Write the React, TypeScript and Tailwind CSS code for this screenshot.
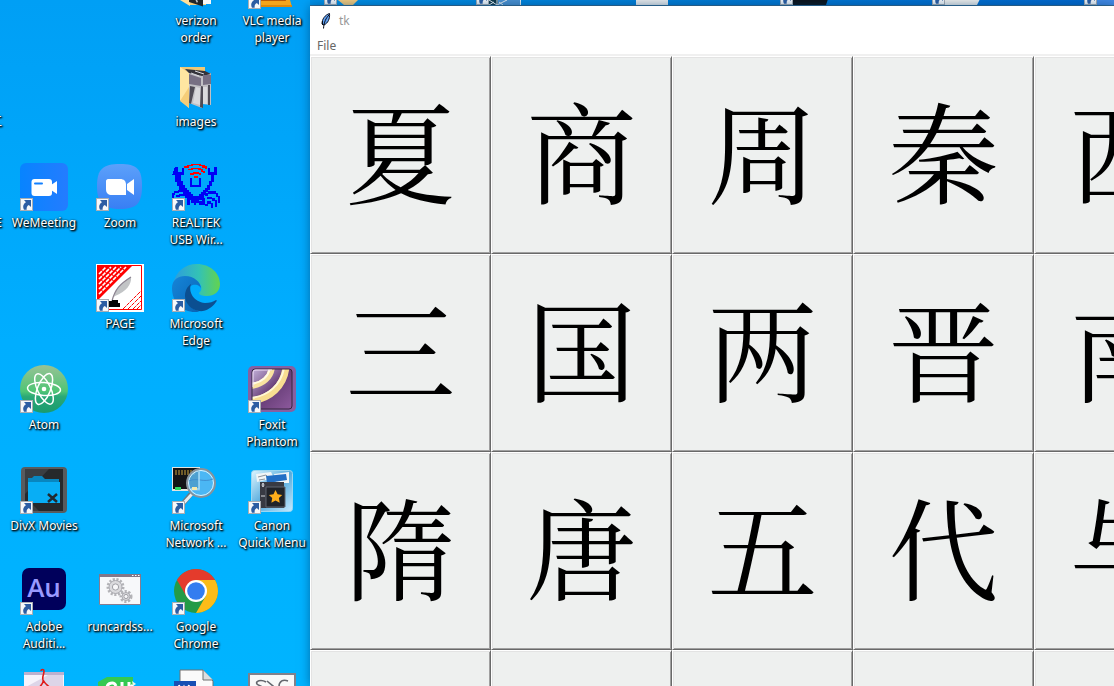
import { Fragment, type ReactNode } from "react";

function Art({ children, crisp = false }: { children: ReactNode; crisp?: boolean }) {
  return (
    <svg
      viewBox="0 0 48 48"
      className="block size-12"
      fill="none"
      aria-hidden="true"
      shapeRendering={crisp ? "crispEdges" : "auto"}
    >
      {children}
    </svg>
  );
}

function ShortcutArrow({ className = "" }: { className?: string }) {
  return (
    <svg viewBox="0 0 13 13" className={`block h-[13px] w-[13px] ${className}`} aria-hidden="true">
      <path d="M0 0h13v13H0z" fill="#a9aeb4" />
      <path d="M1 1h11v11H1z" fill="#f6f8fa" />
      <path d="M4 2h7v7L8.800 7C7 8 6.400 9.500 6.700 11.700H4C2.300 8.500 3.500 5.800 6 4.300z" fill="#2c5da3" />
    </svg>
  );
}

const VerizonFolder = () => (
  <Art>
    <path d="M8 4h26v40H18L8 36z" fill="#f3cf80" />
    <path d="M8 30l10 4v11L8 39z" fill="#ffe09a" />
    <path d="M17 32h14v13.500L17 41z" fill="#20262b" />
    <path d="M31 30h8v13h-8z" fill="#f7f9fb" />
    <path d="M23 38l3 2-1 2z" fill="#d4dade" />
  </Art>
);

const Vlc = () => (
  <Art>
    <path d="M20 4h8l8 28H12z" fill="#f58a07" />
    <path d="M8 32h32l4 14H6z" fill="#f5a51c" />
    <path d="M10 36h27l1 4H10z" fill="#bd5b05" />
    <path d="M6 44h38v2H6z" fill="#df8909" />
  </Art>
);

const ImagesFolder = () => (
  <Art>
    <path d="M8 5h25v32H8z" fill="#efc875" />
    <path d="M8 5l9 6v35l-9-8z" fill="#ffe6a1" />
    <path d="M8 39l9-14v21z" fill="#f5cd78" />
    <path d="M13 7l13 4h13v32l-9-1v4l-13-5V11z" fill="#c1c0c4" />
    <path d="M13 7l20 2 6 3-9 2-13-3z" fill="#34343a" />
    <path d="M17 12l12 4v8l-12-2zM31 13h8v9l-8 1z" fill="#777083" />
    <path d="M19 11l8 3M23 9l9 3" stroke="#d8d8df" />
    <path d="M18 24l5 1-4 17-2-1zM29 24l2 .5V46l-3-1zM36 23h2v20h-2z" fill="#4e4b55" />
    <path d="M24 25l4 1v17l-7-2zM31 25h4v17h-4z" fill="#d9d9dc" />
  </Art>
);

const WeMeeting = () => (
  <Art>
    <defs>
      <linearGradient id="wm">
        <stop stopColor="#0784ff" />
        <stop offset="1" stopColor="#247cff" />
      </linearGradient>
    </defs>
    <rect width="48" height="48" rx="6" fill="url(#wm)" />
    <rect x="11.500" y="16" width="20.500" height="17" rx="3" fill="#fff" />
    <path d="M31 22l6-4v13l-6-4z" fill="#fff" />
    <path d="M15 20.500h7" stroke="#1380ff" strokeWidth="2" strokeLinecap="round" />
  </Art>
);

const Zoom = () => (
  <Art>
    <defs>
      <linearGradient id="zm" x2="0" y2="1">
        <stop stopColor="#5ca0fa" />
        <stop offset="1" stopColor="#387ff4" />
      </linearGradient>
    </defs>
    <path d="M24 1c17 0 22 5 22 22s-5 23-22 23S1 40 1 23 7 1 24 1z" fill="url(#zm)" />
    <path d="M12 16h12c4 0 6 2 6 6v10H16c-4 0-6-2-6-6v-8c0-1 1-2 2-2z" fill="#fff" />
    <path d="M31 21l7-5v16l-7-5z" fill="#fff" />
  </Art>
);

const Realtek = () => (
  <Art crisp>
    <path d="M12 5v-2h3v-1h4v-1.500h10v1.500h4v1h2v3h-2v-1.500h-3v-1.500h-3v-1h-6v1h-4v1.500h-3v1z" fill="#f00" />
    <path d="M16 7v-1.500h3v-1h10v1.500h2v1.500h2v2h-2v-1h-2v-1.500h-3v-1h-5v1z" fill="#f00" />
    <path d="M18 11.500v-1.500h3v-1h6v1h2v2h-2v-1h-5v.5zM22 13h4v2h-4z" fill="#f00" />
    <g fill="#0000f5">
      <path d="M3 4h3v5h4v-4h2v7h-3v6h2v4h2v3h2v2h2v2h2v2h2v2h6v-2h2v-2h2v-2h2v-2h2v-3h2v-4h2v-6h-3v-7h2v4h4v-5h3v8h-3v7h-2v4h-2v4h-2v2h-2v3h-2v3h-2v2h-3v3h-3v2h-2v-2h-3v-3h-3v-2h-3v-3h-2v-3h-2v-2h-2v-4h-2v-4h-2v-7h-3z" />
      <path d="M18 15h2v7h7v-7h2v9h-11z" />
      <path d="M0 35v-5h2v-2h4v-1h8v2h-7v1h-4v2h-1v3zM4 34v-2h3v-1h7v1.500h-6v1.500z" />
      <path d="M15 34h3v8h-3zM27 38h3v-3h3v7h-6zM33 33v-3h3v-2h8v2h2v3h2v7h-2v-6h-2v-3h-8v2z" />
      <path d="M35 34h5v1h3v2h2v7h-2v-6h-3v-2h-5zM35 38h4v2h2v5h-2v-4h-4zM33 41h3v2h-3z" />
    </g>
  </Art>
);

const Page = () => (
  <Art>
    <path d="M0 0h48v48H0z" fill="#fff" />
    <path d="M1.500 1.500h44v44h-44z" stroke="#f00" />
    <path d="M1 1h36L1 37z" fill="#f00" />
    <path
      d="M3 10L10 3M3 15L15 3M3 20L20 3M3 25L25 3M3 30L30 3"
      stroke="#fff"
      strokeWidth="1.600"
      strokeDasharray="4 1"
    />
    <path d="M27 45l18-18M32 45l13-13M37 45l8-8M41 45l4-4" stroke="#f00" strokeDasharray="4 1" />
    <path d="M18 33c1-8 8-15 17-20 1 7-5 15-16 19z" fill="#c2c4c6" />
    <path d="M16 37c3-12 8-17 19-24" stroke="#8b8290" strokeWidth="1.200" />
    <path d="M13 43v-6h3v-1h6v3h2v4z" fill="#050505" />
  </Art>
);

const Edge = () => (
  <Art>
    <defs>
      <linearGradient id="edgeTop">
        <stop stopColor="#2d9cdf" />
        <stop offset=".55" stopColor="#33c2b5" />
        <stop offset="1" stopColor="#64d34e" />
      </linearGradient>
      <linearGradient id="edgeSide" x2="1" y2="1">
        <stop stopColor="#1685d8" />
        <stop offset="1" stopColor="#0864b5" />
      </linearGradient>
    </defs>
    <path d="M1 20C4 7 13 0 25 0c13 0 23 9 23 20 0 8-6 12-13 12-5 0-8-1-8-3 2-2 3-4 2-7-2-5-9-9-16-8-5 0-9 2-12 6z" fill="url(#edgeTop)" />
    <path d="M0 24c0-8 6-12 13-12 9 0 16 6 16 13 0-4-10-8-14 2-4 11 5 19 13 20-2 1-4 1-5 1C10 48 0 38 0 24z" fill="url(#edgeSide)" />
    <path d="M19 20c-3 8 3 18 14 19 5 0 8-1 11-3 1 0 1 1 0 2-4 6-11 10-17 9-8-1-14-8-14-15 0-6 3-10 6-12z" fill="#0b4f91" />
  </Art>
);

const Atom = () => (
  <Art>
    <defs>
      <linearGradient id="atom" x2="0" y2="1">
        <stop stopColor="#98c295" />
        <stop offset=".55" stopColor="#4fc575" />
        <stop offset=".66" stopColor="#2aa877" />
        <stop offset="1" stopColor="#1a9b6d" />
      </linearGradient>
    </defs>
    <circle cx="24" cy="24" r="24" fill="url(#atom)" />
    <g stroke="#fff" strokeWidth="1.500">
      <ellipse cx="24" cy="24" rx="16.500" ry="6.500" transform="rotate(4 24 24)" />
      <ellipse cx="24" cy="24" rx="16.500" ry="6.500" transform="rotate(64 24 24)" />
      <ellipse cx="24" cy="24" rx="16.500" ry="6.500" transform="rotate(-68 24 24)" />
    </g>
    <circle cx="24" cy="24" r="2.300" fill="#fff" />
  </Art>
);

const Foxit = () => (
  <Art>
    <defs>
      <linearGradient id="foxit" x2="1" y2="1">
        <stop stopColor="#c3b2da" />
        <stop offset=".5" stopColor="#683e78" />
        <stop offset="1" stopColor="#8d5a9d" />
      </linearGradient>
      <clipPath id="foxitFace">
        <rect x="4" y="4" width="40" height="40" rx="3" />
      </clipPath>
    </defs>
    <rect x="0" y="1" width="48" height="46" rx="5" fill="#8661a1" />
    <rect x="4" y="4" width="40" height="40" rx="3" fill="url(#foxit)" />
    <g clipPath="url(#foxitFace)">
      <path d="M24 2c-1 10-9 18-22 19" stroke="#f8e3a0" strokeWidth="6" />
      <path d="M22 2c-1 9-8 16-20 17" stroke="#fffbe6" strokeWidth="2" />
      <path d="M38 2C36 21 22 34 2 36" stroke="#f8dd91" strokeWidth="7" />
      <path d="M36 3C33 20 20 31 3 33" stroke="#fff8d7" strokeWidth="2" />
    </g>
    <rect x="4" y="4" width="40" height="40" rx="3" stroke="#35263e" />
    <path d="M5 22V8c0-2 1-3 3-3h16" stroke="#f0dff8" />
  </Art>
);

const DivX = () => (
  <Art>
    <path d="M5 1h38q4 0 4 4v38q0 4-4 4H5q-4 0-4-4V5q0-4 4-4z" fill="#585b5e" />
    <path d="M5 3h38v42H5z" fill="#26292c" />
    <path d="M5 3h24L5 28zM5 45h14l-9-9-5 4z" fill="#3a3e42" />
    <path d="M8 16v-4h4l2-2h8l3 3h14v3z" fill="#0886bf" />
    <path d="M8 16h32v21H8z" fill="#08aef5" />
    <path d="M28 28l9 8m0-8l-9 8" stroke="#222a30" strokeWidth="2.500" />
  </Art>
);

const NetworkMonitor = () => (
  <Art>
    <path d="M0 1h28v24H0z" fill="#e3e3df" />
    <path d="M1 2h26v21H1z" fill="#131416" />
    <path d="M4 4v5M7 4v5M10 4v5M13 4v5M16 4v5M19 4v5M22 4v5" stroke="#cda33a" />
    <path d="M3 21h6v3H3z" fill="#2bd660" />
    <path d="M19 28L8 41" stroke="#6e7980" strokeWidth="5" />
    <path d="M20 28L9 40" stroke="#e6ecef" strokeWidth="3" />
    <circle cx="29" cy="17" r="14" fill="#58b8f2" fillOpacity=".85" stroke="#88929b" strokeWidth="2" />
    <circle cx="29" cy="17" r="12.500" stroke="#d9f4ff" />
    <path d="M17 15c8-4 14 2 24-2" stroke="#3f8fd0" />
    <path d="M27 6v17h-8" stroke="#a4daf8" strokeWidth="1.500" />
    <path d="M20 21h5v3h-5z" fill="#f5e9ae" />
  </Art>
);

const Canon = () => (
  <Art>
    <defs>
      <linearGradient id="canon" x2="1" y2="1">
        <stop stopColor="#dcf5ff" />
        <stop offset=".5" stopColor="#55abdd" />
        <stop offset="1" stopColor="#c8eaff" />
      </linearGradient>
    </defs>
    <rect x="3.500" y="4.500" width="41" height="41" rx="3" fill="url(#canon)" stroke="#9ad7f1" />
    <path d="M8 8l15-2 3 6-17 4zM26 8l15-2v11H28z" fill="#f0f5f7" />
    <path d="M10 11l8-2 2 2M11 14l6-1" stroke="#8a939c" />
    <path d="M18 10l20-2 1 6-20 3z" fill="#226fc5" />
    <path d="M12 16h24v26H12z" fill="#383a43" />
    <path d="M18 21h19v20H18z" fill="#202329" stroke="#5e6571" />
    <path d="M15 17l1 2-1 2-1-2zM13 30h4" stroke="#d6d9df" />
    <path d="M27.500 24l2.100 4.200 4.600.7-3.300 3.200.8 4.600-4.200-2.200-4.100 2.200.8-4.600-3.300-3.200 4.600-.7z" fill="#ffae1b" />
  </Art>
);

const Audition = () => (
  <Art>
    <rect x="2" y="1" width="44" height="42" rx="7" fill="#00005b" />
    <text x="24" y="30" textAnchor="middle" fontFamily="Open Sans, sans-serif" fontSize="26" fontWeight="600" fill="#9999ff">
      Au
    </text>
  </Art>
);

function Gear({ x, y, r }: { x: number; y: number; r: number }) {
  return (
    <g>
      <circle cx={x} cy={y} r={r} stroke="#b4b4b8" strokeWidth="3" strokeDasharray="2.100 1.500" />
      <circle cx={x} cy={y} r={r - 1} fill="#dadadd" stroke="#aaaab0" />
      <circle cx={x} cy={y} r={r / 2.4} fill="#f7f7f9" stroke="#a0a0a6" />
    </g>
  );
}

const Batch = () => (
  <Art>
    <path d="M3.500 7.500h41v30h-41z" fill="#f7f8fa" stroke="#887c91" />
    <path d="M3 7h42v3H3z" fill="#827789" />
    <path d="M36 8.500h1.500m1.500 0h1.500m1.500 0h1.500" stroke="#fff" />
    <Gear x={19.5} y={20} r={7.5} />
    <Gear x={30} y={29.5} r={5} />
  </Art>
);

const Chrome = () => (
  <Art>
    <circle cx="24" cy="24" r="22" fill="#249b47" />
    <path d="M4.950 13A22 22 0 0 1 43.050 13H24L14.470 29.500z" fill="#e43b2c" />
    <path d="M43.050 13A22 22 0 0 1 24 46l9.530-16.500L24 13z" fill="#fbbc18" />
    <circle cx="24" cy="24" r="11" fill="#fff" />
    <circle cx="24" cy="24" r="8.800" fill="#347df0" />
  </Art>
);

const PdfTool = () => (
  <Art>
    <path d="M4 4h40v44H4z" fill="#f6f3fb" />
    <path d="M4 4h40v3H4z" fill="#bdb0ce" />
    <path d="M4 20L28 7h15v41H4z" fill="#ddd5e8" />
    <path d="M21 3c0-2 3-2 3 0 0 4-2 5-1 9 1 3-3 7-7 10m7-10c2 4 5 6 9 9" stroke="#e11b18" strokeWidth="1.600" />
  </Art>
);

const GreenApp = () => (
  <Art>
    <path d="M2 14l9-5h26v39H2z" fill="#35c951" />
    <path d="M20 18c-2-5-9-3-9 2M26 14v8m7-8v8m4-5l-5 5" stroke="#fff" strokeWidth="3" />
    <path d="M36 13l4 3-3 2z" fill="#e7f7e9" />
  </Art>
);

const WordFile = () => (
  <Art>
    <path d="M8 2h23l10 11v35H8z" fill="#fafafa" stroke="#717171" />
    <path d="M31 2v10h10" fill="#dddedf" stroke="#717171" />
    <path d="M2 13h22v30H2z" fill="#174fb4" />
    <path d="M7 17l2 9 3-7 3 7 2-9" stroke="#fff" strokeWidth="2" />
  </Art>
);

const Script = () => (
  <Art>
    <path d="M1 6h46v42H1z" fill="#f8f8f8" stroke="#81818b" strokeWidth="2" />
    <path d="M18 14c-5-3-11-1-9 2 2 2 7 2 7 6M19 13l6 5-6 3M40 13c-8-3-12 6-6 8 3 1 6 0 6-3" stroke="#64666d" strokeWidth="1.600" />
  </Art>
);

type Tile = { lines?: string[]; art?: ReactNode; shortcut?: boolean; clipped?: boolean };

const tiles: Tile[][] = [
  [
    {},
    {},
    {},
    { lines: ["verizon", "order"], art: <VerizonFolder /> },
    { lines: ["VLC media", "player"], art: <Vlc />, shortcut: true },
  ],
  [{ lines: ["工"], clipped: true }, {}, {}, { lines: ["images"], art: <ImagesFolder /> }, {}],
  [
    { lines: ["E"], clipped: true },
    { lines: ["WeMeeting"], art: <WeMeeting />, shortcut: true },
    { lines: ["Zoom"], art: <Zoom />, shortcut: true },
    { lines: ["REALTEK", "USB Wir..."], art: <Realtek />, shortcut: true },
    {},
  ],
  [
    {},
    {},
    { lines: ["PAGE"], art: <Page />, shortcut: true },
    { lines: ["Microsoft", "Edge"], art: <Edge />, shortcut: true },
    {},
  ],
  [
    {},
    { lines: ["Atom"], art: <Atom />, shortcut: true },
    {},
    {},
    { lines: ["Foxit", "Phantom"], art: <Foxit />, shortcut: true },
  ],
  [
    {},
    { lines: ["DivX Movies"], art: <DivX />, shortcut: true },
    {},
    { lines: ["Microsoft", "Network ..."], art: <NetworkMonitor />, shortcut: true },
    { lines: ["Canon", "Quick Menu"], art: <Canon />, shortcut: true },
  ],
  [
    {},
    { lines: ["Adobe", "Auditi..."], art: <Audition />, shortcut: true },
    { lines: ["runcardss..."], art: <Batch /> },
    { lines: ["Google", "Chrome"], art: <Chrome />, shortcut: true },
    {},
  ],
  [{}, { art: <PdfTool /> }, { art: <GreenApp /> }, { art: <WordFile /> }, { art: <Script /> }],
];

function DesktopTile({ lines, art, shortcut, clipped }: Tile) {
  return (
    <div className={`flex flex-col gap-[3px] ${clipped ? "items-end pr-1" : "items-center"}`}>
      <div className="relative size-12">
        {art}
        {shortcut && <ShortcutArrow className="absolute bottom-0 left-0" />}
      </div>
      {lines && (
        <span className="text-center text-xs leading-[17px] whitespace-nowrap text-white [text-shadow:1px_1px_2px_#000,1px_1px_2px_#000,0_0_2px_#0008]">
          {lines.map((line, i) => (
            <Fragment key={line}>
              {i > 0 && <br />}
              {line}
            </Fragment>
          ))}
        </span>
      )}
    </div>
  );
}

const rows = [
  ["夏", "商", "周", "秦", "西"],
  ["三", "国", "两", "晋", "南"],
  ["隋", "唐", "五", "代", "与"],
  ["", "", "", "", ""],
];

function Feather() {
  return (
    <svg viewBox="0 0 12 16" className="block h-4 w-3" aria-hidden="true">
      <path d="M9.500 0.500C5 2 2 6 2 11l2 1c4-2 6-6 5.500-11.500z" fill="#5f9ff1" stroke="#0a1020" />
      <path d="M9 2C6 5 4 9 3.500 15.500M2.500 8v4" stroke="#080c16" strokeWidth="1" fill="none" />
    </svg>
  );
}

/* Bottom edges of the desktop icons that show above the window. */
function TopStrip() {
  return (
    <div className="h-1.5 shrink-0 overflow-hidden border-b border-[#34688f] bg-linear-to-r from-[#0090e6] via-[#007ad3] to-[#0066cd]">
      <div className="-mt-2 grid grid-cols-[repeat(6,152px)] pl-[14px]">
        <div className="flex">
          <ShortcutArrow />
          <svg viewBox="0 0 22 13" className="h-[13px] w-[22px]" aria-hidden="true">
            <path d="M1 8h20l-5 5H7z" fill="#f4ca7c" />
          </svg>
        </div>
        <div className="flex">
          <ShortcutArrow />
          <svg viewBox="0 0 34 13" className="h-[13px] w-[34px]" aria-hidden="true">
            <path d="M0 7h32v6H0z" fill="#4b91d0" />
            <path d="M0 8h9v5H0z" fill="#103848" />
            <path d="M0 8l8 5 10-5M8 8v5M0 13l5-3M14 13l-4-3M31.500 7v6" stroke="#e9eef0" fill="none" />
          </svg>
        </div>
        <div className="flex pl-2">
          <div className="h-[13px] w-8 bg-[#e9eaeb]" />
        </div>
        <div className="flex">
          <ShortcutArrow />
          <svg viewBox="0 0 36 13" className="h-[13px] w-9" aria-hidden="true">
            <path d="M0 7h35l-2 6H0z" fill="#0b1117" />
          </svg>
        </div>
        <div className="flex">
          <ShortcutArrow />
          <svg viewBox="0 0 36 13" className="h-[13px] w-9" aria-hidden="true">
            <path d="M0 7h35l-3 6H0z" fill="#ededeb" />
          </svg>
        </div>
        <div className="flex">
          <ShortcutArrow />
          <div className="h-[13px] w-9 bg-[#4289e4]" />
        </div>
      </div>
    </div>
  );
}

export default function App() {
  return (
    <div className="flex h-screen overflow-hidden bg-linear-to-b from-[#009ff5] via-[#00aeff] to-[#00b4ff] font-['Noto_Sans','Noto_Sans_CJK_SC',sans-serif]">
      <aside className="w-[310px] shrink-0 overflow-hidden" aria-label="Desktop">
        <div className="-mt-[39px] -ml-[70px] grid auto-rows-[101px] grid-cols-[repeat(5,76px)]">
          {tiles.flat().map((tile, i) => (
            <DesktopTile key={i} {...tile} />
          ))}
        </div>
      </aside>

      <div className="flex min-w-0 flex-1 flex-col">
        <TopStrip />
        <main className="flex min-h-0 flex-1 flex-col overflow-hidden bg-white shadow-[0_0_10px_#003a6c99]">
          <header className="flex h-[30px] shrink-0 items-center gap-[7px] pl-2.5 text-xs text-[#999]">
            <Feather />
            <h1>tk</h1>
          </header>
          <nav className="flex h-5 shrink-0 items-center border-b-2 border-[#f0f0f0] pt-0.5 pl-[7px] text-xs leading-4 text-[#666]">
            <button type="button">File</button>
          </nav>
          <div className="grid auto-rows-[198px] grid-cols-[repeat(5,181px)] font-['Noto_Serif_CJK_SC','Noto_Sans_CJK_SC',serif]">
            {rows.flat().map((glyph, i) => (
              <button
                key={i}
                type="button"
                className="flex items-center justify-center border border-t-white border-r-[#696969] border-b-[#696969] border-l-white bg-[#eef0ef] pb-[14px] text-[110px] leading-none font-normal text-black shadow-[inset_1px_1px_0_#e3e3e3,inset_-1px_-1px_0_#a0a0a0]"
              >
                {glyph}
              </button>
            ))}
          </div>
        </main>
      </div>
    </div>
  );
}
